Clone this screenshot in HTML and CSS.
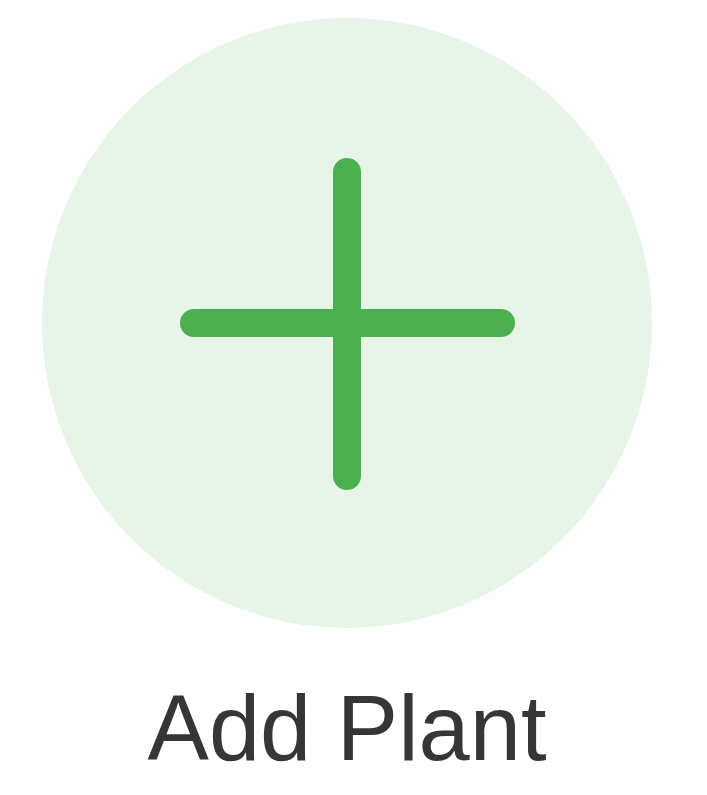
FILE: index.html
```html
<!DOCTYPE html>
<html lang="en">
<head>
<meta charset="utf-8">
<link rel="stylesheet" href="styles.css">
<title>Add Plant</title>
</head>
<body>
<div class="add-plant">
  <div class="circle">
    <svg class="plus" width="610" height="610" viewBox="0 0 610 610">
      <path d="M305 154 V458 M152 305 H459" stroke="#4caf50" stroke-width="28" stroke-linecap="round" fill="none"/>
    </svg>
  </div>
  <div class="label">Add Plant</div>
</div>
</body>
</html>
```
FILE: styles.css
```css
html, body {
  margin: 0;
  padding: 0;
  background: #ffffff;
}
.add-plant {
  width: 610px;
  padding: 18px 0 0 42px;
  display: flex;
  flex-direction: column;
  align-items: center;
}
.circle {
  width: 610px;
  height: 610px;
  border-radius: 50%;
  background: #e6f5e8;
  display: flex;
  align-items: center;
  justify-content: center;
}
.plus {
  display: block;
}
.label {
  margin-top: 54px;
  font-family: "Liberation Sans", Arial, sans-serif;
  font-size: 92px;
  line-height: 92px;
  color: #363636;
}
```
